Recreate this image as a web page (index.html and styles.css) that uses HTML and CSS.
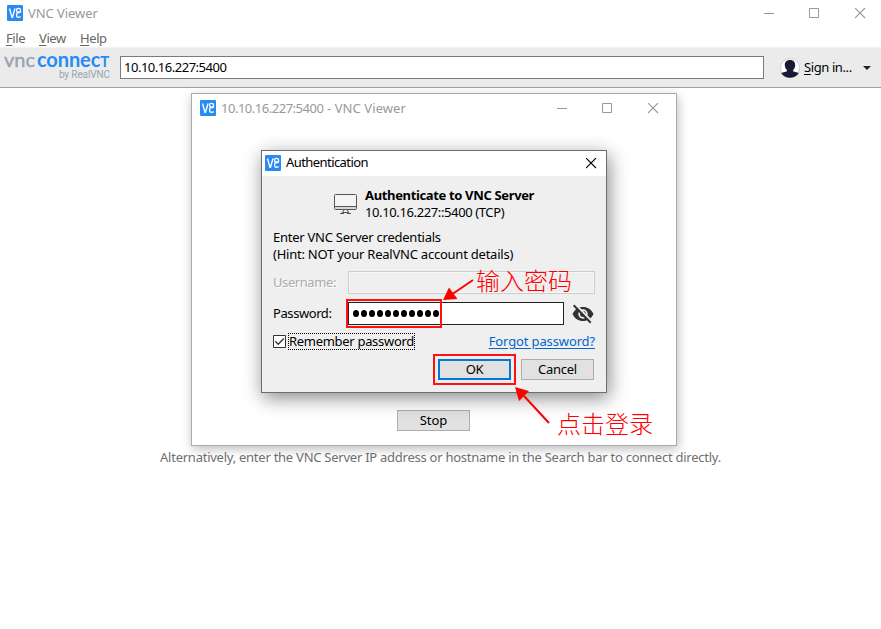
FILE: index.html
```html
<!DOCTYPE html>
<html lang="en">
<head>
<meta charset="utf-8">
<title>VNC Viewer</title>
<link rel="stylesheet" href="styles.css">
</head>
<body>
<svg width="0" height="0" class="defs">
  <symbol id="app" viewBox="0 0 16 16"><rect width="16" height="16" rx="1" fill="#268bf5"/><path d="M2.5 3.5 5 12.2h.5L8 3.5M9.4 4.5c.3-1.6 4-1.7 4.1.4v2c0 1.1-3.7.1-3.8 1.8v2.7c.1 1.1 3.6 1.1 4 .1M9.7 4.5v1.7c.2 1 2.5.8 3.7.6" fill="none" stroke="#fff" stroke-width="1.35"/></symbol>
  <symbol id="min" viewBox="0 0 11 11"><path d="M0 5.5h10" stroke="currentColor"/></symbol>
  <symbol id="max" viewBox="0 0 11 11"><path d="M.5.5h9v9h-9z" fill="none" stroke="currentColor"/></symbol>
  <symbol id="close" viewBox="0 0 11 11"><path d="m0 0 10 10M10 0 0 10" stroke="currentColor" stroke-width="1.1"/></symbol>
</svg>
<div class="app">
  <header class="titlebar">
    <svg class="app-icon"><use href="#app"/></svg><span class="title t-main">VNC Viewer</span>
    <div class="controls"><svg><use href="#min"/></svg><svg><use href="#max"/></svg><svg><use href="#close"/></svg></div>
  </header>
  <nav class="menu"><span class="m1"><u>F</u>ile</span><span class="m2"><u>V</u>iew</span><span class="m3"><u>H</u>elp</span></nav>
  <div class="toolbar">
    <div class="logo"><div class="brand"><span class="vnc">vnc</span><span class="connect">connec</span><span class="tee">T</span></div><div class="by"><span>by RealVNC</span></div></div>
    <div class="address"><span class="ip">10.10.16.227:5400</span></div>
    <svg class="user" viewBox="0 0 20 20"><circle cx="10" cy="10" r="9.5" fill="#fff" stroke="#d2d2d2"/><path d="M10 2c3.500 0 5.300 2.200 5.200 5.100 0 2.200-.9 4-2.200 5.100v1.100l5.800 1.700c-1.600 3-5 4.800-8.800 4.800S2.800 18 1.200 15L7 13.300v-1.100C5.700 11 4.800 9.300 4.800 7.100 4.700 4.200 6.500 2 10 2z" fill="#1b1a35"/></svg>
    <span class="signin"><u>S</u>ign in...</span>
    <svg class="caret" viewBox="0 0 8 4"><path d="M0 0h8L4 4z" fill="#222"/></svg>
  </div>
  <main><p class="hint"><span>Alternatively, enter the VNC Server IP address or hostname in the Search bar to connect directly.</span></p></main>
</div>

<section class="window">
  <header class="win-title">
    <svg class="app-icon"><use href="#app"/></svg><span class="title"><span class="ip">10.10.16.227:5400</span><span class="suffix"> - VNC Viewer</span></span>
    <div class="controls"><svg><use href="#min"/></svg><svg><use href="#max"/></svg><svg><use href="#close"/></svg></div>
  </header>
  <div class="win-foot"><div class="button">Stop</div></div>
</section>

<section class="dialog">
  <header class="dialog-title"><svg class="app-icon"><use href="#app"/></svg><span class="t-auth">Authentication</span><svg class="x"><use href="#close"/></svg></header>
  <div class="dialog-body">
    <div class="server">
      <svg class="monitor" viewBox="0 0 23 20"><path d="M1.5.5h20a1 1 0 0 1 1 1v13a1 1 0 0 1-1 1h-20a1 1 0 0 1-1-1v-13a1 1 0 0 1 1-1z" fill="#f4f4f4" stroke="#555"/><path d="M1 12.5h21" stroke="#555"/><path d="M1 14h21" stroke="#bbb"/><path d="m10 16-2 3m5-3 2 3M6 19.500h4m3 0h4M9 18.500h5" stroke="#555" fill="none"/></svg>
      <div><div class="line bold">Authenticate to VNC Server</div><div class="line t-tcp">10.10.16.227::5400 (TCP)</div></div>
    </div>
    <div class="message"><div class="line t-enter">Enter VNC Server credentials</div><div class="line t-hint">(Hint: NOT your RealVNC account details)</div></div>
    <div class="row user-row"><span class="label off">Username:</span><div class="field disabled"></div></div>
    <div class="row pass-row"><span class="label">Password:</span><div class="field password"><i></i><i></i><i></i><i></i><i></i><i></i><i></i><i></i><i></i><i></i><i></i></div>
      <svg class="eye" viewBox="0 0 22 20"><path d="M.5 10C2.500 5.500 6.500 3 11 3s8.500 2.500 10.500 7c-2 4.500-6 7-10.500 7S2.500 14.500.5 10z" fill="#333"/><circle cx="11" cy="10" r="4.700" fill="#efefef"/><circle cx="11" cy="10" r="3" fill="#333"/><path d="m3 0 17 17.500" stroke="#efefef" stroke-width="2"/><path d="m1.700 1.200 17 17.500" stroke="#333" stroke-width="2"/></svg>
    </div>
    <div class="row remember"><svg class="check" viewBox="0 0 13 13"><path d="M.5.5h12v12H.5z" fill="#fff" stroke="#333"/><path d="m2.300 6.300 2.900 3L10.800 3.500" fill="none" stroke="#333" stroke-width="1.300"/></svg><span class="focus"><span>Remember password</span></span><a class="forgot">Forgot password?</a></div>
    <div class="actions"><div class="button ok">OK</div><div class="button cancel">Cancel</div></div>
  </div>
</section>

<div class="mark mark-pass"></div>
<div class="mark mark-ok"></div>
<svg class="arrows" viewBox="0 0 881 629"><path d="M473 280 451 295M549 423l-25-27" stroke="red" stroke-width="2"/><path d="m443 300 6-12.500 8.500 11.500zM515 387l14 4-10 10z" fill="red"/></svg>
<div class="note note-pass">输入密码</div>
<div class="note note-ok">点击登录</div>
</body>
</html>
```

FILE: styles.css
```css
* { box-sizing: border-box; }
body { margin: 0; width: 881px; height: 629px; overflow: hidden; position: relative; background: #fff; color: #000; font: 13px/17px "Noto Sans", sans-serif; white-space: nowrap; }
svg { display: block; flex: none; overflow: visible; }
u { text-decoration-thickness: 1px; text-underline-offset: 2px; }
.defs { position: absolute; }
.app { height: 629px; display: flex; flex-direction: column; }
.titlebar { height: 28px; padding: 5px 15px 0 7px; display: flex; align-items: flex-start; }
.app-icon { width: 16px; height: 16px; }
.title { color: #999; margin-left: 5px; letter-spacing: -.06px; }
.ip { letter-spacing: -.48px; }
.suffix { letter-spacing: .09px; }
.controls { display: flex; margin: 3px 0 0 auto; color: #999; }
.controls svg, .x { width: 11px; height: 11px; }
.controls svg:nth-child(2) { margin: 0 35px 0 34px; }
.menu { height: 20px; display: flex; padding: 2px 0 0 6px; color: #666; letter-spacing: -.4px; }
.m1 { width: 33px; }
.m2 { width: 41px; }
.toolbar { height: 40px; background: #ebebeb; border-bottom: 1px solid #a0a0a0; box-shadow: 0 -1px 1px #f3f3f3; display: flex; align-items: center; padding-left: 4px; }
.logo { width: 116px; height: 39px; padding-top: 2px; }
.brand { height: 19px; display: flex; font: 20px/18px Lato, sans-serif; color: #98a4b3; }
.vnc { width: 33px; -webkit-text-stroke: .4px #98a4b3; }
.connect { color: #268bf5; font-weight: 700; letter-spacing: -.1px; }
.tee { color: #268bf5; font-weight: 700; font-size: 15px; line-height: 22px; }
.by { width: 106px; font: 10px/12px Roboto, sans-serif; text-align: right; color: #98a4b3; letter-spacing: -.1px; }
.address { width: 644px; height: 23px; border: 1px solid #7a7a7a; background: #fff; padding: 2px 3px; }
.user { width: 20px; height: 20px; margin-left: 16px; }
.signin { margin-left: 4px; width: 56px; letter-spacing: -.4px; }
.caret { width: 8px; height: 4px; margin-left: 3px; }
main { padding-top: 361px; }
.hint { margin: 0; text-align: center; color: #707070; letter-spacing: -.25px; }

.window { position: absolute; left: 191px; top: 93px; width: 486px; height: 353px; border: 1px solid #aaa; background: #fff; box-shadow: 1px 3px 10px #0004; display: flex; flex-direction: column; justify-content: space-between; }
.win-title { display: flex; padding: 6px 17px 0 8px; }
.win-foot { display: flex; padding: 0 0 14px 205px; }
.button { width: 73px; height: 21px; border: 1px solid #adadad; background: #e1e1e1; text-align: center; line-height: 19px; }
.cancel { letter-spacing: -.25px; }

.dialog { position: absolute; left: 261px; top: 150px; width: 346px; height: 243px; border: 1px solid #6e6e6e; background: #efefef; box-shadow: 2px 5px 18px #0007; }
.dialog-title { height: 25px; background: #fff; display: flex; padding: 4px 9px 0 3px; }
.t-auth { margin-left: 5px; line-height: 15px; letter-spacing: -.57px; }
.x { margin: 3px 0 0 auto; }
.dialog-body { padding: 11px 11px 0; }
.server { display: flex; padding-left: 61px; gap: 8px; }
.monitor { width: 23px; height: 20px; margin-top: 7px; }
.line { height: 17px; }
.bold { font-weight: 700; letter-spacing: -.35px; }
.t-tcp { letter-spacing: -.38px; }
.t-enter { letter-spacing: -.25px; }
.t-hint { letter-spacing: -.23px; }
.message { margin-top: 8px; height: 42px; }
.row { display: flex; align-items: center; }
.label { width: 75px; letter-spacing: -.42px; }
.off { color: #aaa; text-shadow: 1px 1px #fff; }
.field { height: 23px; }
.disabled { width: 247px; border: 1px solid #ccc; box-shadow: inset 0 0 0 1px #f8f8f8; }
.pass-row { margin-top: 8px; }
.password { width: 216px; border: 1px solid #222; background: #fff; display: flex; align-items: center; gap: 2px; padding-left: 4px; }
.password i { width: 6px; height: 7px; border-radius: 50%; background: #000; }
.eye { width: 22px; height: 20px; margin-left: 8px; }
.remember { margin-top: 8px; height: 17px; }
.check { width: 13px; height: 13px; margin-right: 2px; }
.focus { width: 127px; height: 17px; border: 1px dotted #000; line-height: 15px; letter-spacing: -.3px; }
.forgot { color: #0066cc; text-decoration: underline; text-underline-offset: 2px; margin-left: auto; letter-spacing: -.13px; }
.actions { display: flex; justify-content: flex-end; gap: 10px; margin: 9px 1px 0 0; }
.ok { border: 2px solid #0078d7; line-height: 17px; letter-spacing: -.3px; }

.mark { position: absolute; border: 2px solid #f11; }
.mark-pass { left: 346px; top: 299px; width: 96px; height: 29px; }
.mark-ok { left: 433px; top: 354px; width: 83px; height: 31px; }
.arrows { position: absolute; inset: 0; width: 881px; height: 629px; }
.note { position: absolute; color: red; font: 300 24px/28px "Noto Sans CJK SC", sans-serif; }
.note-pass { left: 476px; top: 266px; }
.note-ok { left: 557px; top: 409px; }
```
